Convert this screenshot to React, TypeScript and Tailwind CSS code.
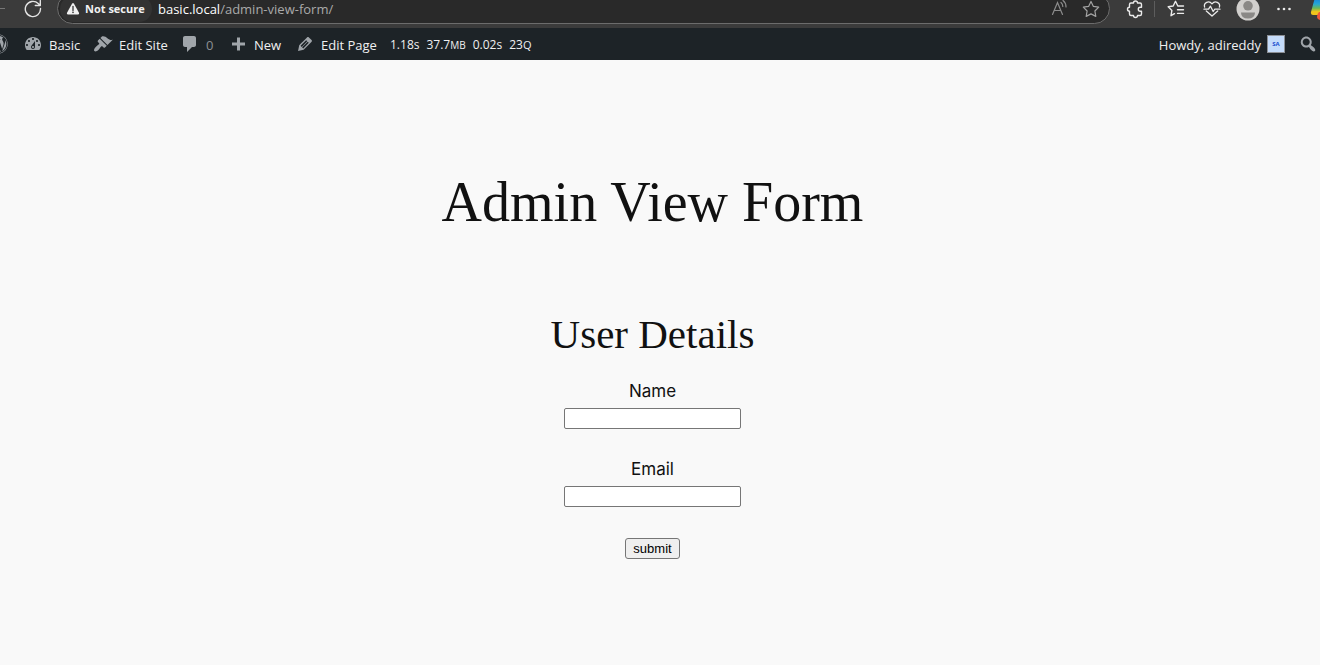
import React from "react";
import { FaWordpress } from "react-icons/fa";

type GlyphProps = { d: string; className?: string };

function Glyph({ d, className = "" }: GlyphProps) {
  return (
    <svg viewBox="0 0 20 20" aria-hidden="true" className={`size-5 shrink-0 fill-[#a0a5aa] ${className}`}>
      <path d={d} />
    </svg>
  );
}

const glyphs = {
  dashboard:
    "M3.76 16h12.48c1.1-1.37 1.76-3.11 1.76-5 0-4.42-3.58-8-8-8s-8 3.58-8 8c0 1.89.66 3.63 1.76 5zM10 4c.55 0 1 .45 1 1s-.45 1-1 1-1-.45-1-1 .45-1 1-1zM6 6c.55 0 1 .45 1 1s-.45 1-1 1-1-.45-1-1 .45-1 1-1zm8 0c.55 0 1 .45 1 1s-.45 1-1 1-1-.45-1-1 .45-1 1-1zm-5.37 5.55L12 7v6c0 1.1-.9 2-2 2s-2-.9-2-2c0-.57.24-1.08.63-1.45zM4 10c.55 0 1 .45 1 1s-.45 1-1 1-1-.45-1-1 .45-1 1-1zm12 0c.55 0 1 .45 1 1s-.45 1-1 1-1-.45-1-1 .45-1 1-1zm-5 3c0-.55-.45-1-1-1s-1 .45-1 1 .45 1 1 1 1-.45 1-1z",
  brush:
    "M14.48 11.06L7.41 3.99l1.5-1.5c.5-.56 2.3-.47 3.51.32 1.21.8 1.43 1.28 2.91 2.1 1.18.64 2.45 1.26 4.45.85zm-.71.71L6.7 4.7 4.93 6.47c-.39.39-.39 1.02 0 1.41l1.06 1.06c.39.39.39 1.03 0 1.42-.6.6-1.43 1.11-2.21 1.69-.35.26-.7.53-1.01.84C1.43 14.23.4 16.08 1.4 17.07c.99 1 2.84-.03 4.18-1.36.31-.31.58-.66.85-1.02.57-.78 1.08-1.61 1.69-2.21.39-.39 1.02-.39 1.41 0l1.06 1.06c.39.39 1.02.39 1.41 0z",
  comment: "M5 2h9c1.1 0 2 .9 2 2v7c0 1.1-.9 2-2 2h-2l-5 5v-5H5c-1.1 0-2-.9-2-2V4c0-1.1.9-2 2-2z",
  plus: "M17 8.500v3h-5v5H9v-5H4v-3h5v-5h3v5h5z",
  pencil:
    "M13.89 3.39l2.71 2.72c.46.46.42 1.24.03 1.64l-8.01 8.02-5.56 1.16 1.16-5.58s7.6-7.63 7.99-8.03c.39-.39 1.22-.39 1.68.07zm-2.73 2.79l-5.59 5.61 1.11 1.11 5.54-5.65zm-2.97 8.23l5.58-5.6-1.07-1.08-5.59 5.6z",
  search:
    "M12.14 4.18c1.87 1.87 2.11 4.75.72 6.89.12.1.22.21.36.31.2.16.47.36.81.59.34.24.56.39.66.47.42.31.73.57.94.78.32.32.6.65.84 1 .25.35.44.69.59 1.04.14.35.21.68.18 1-.02.32-.14.59-.36.81s-.49.34-.81.36c-.31.02-.65-.04-.99-.19-.35-.14-.7-.34-1.04-.59-.35-.24-.68-.52-1-.84-.21-.21-.47-.52-.77-.93-.1-.13-.25-.35-.47-.66-.22-.32-.4-.57-.56-.78-.16-.2-.29-.35-.44-.5-2.07 1.09-4.69.76-6.44-.98-2.14-2.15-2.14-5.64 0-7.78 2.15-2.15 5.63-2.15 7.78 0zm-1.41 6.36c1.36-1.37 1.36-3.58 0-4.95-1.37-1.37-3.59-1.37-4.95 0-1.37 1.37-1.37 3.58 0 4.95 1.36 1.37 3.58 1.37 4.95 0z",
};

function BrowserBar() {
  return (
    <header className="h-7 overflow-hidden bg-[#3b3b3b]">
      <div className="-mt-[7px] flex h-[31px] items-center">
        <div className="flex w-[57px] shrink-0 items-center">
          <button type="button" aria-label="Forward" className="w-[23px]">
            <svg viewBox="0 0 23 16" className="h-4 w-[23px]" fill="none" stroke="#777777">
              <path d="M0 7.5h5" />
            </svg>
          </button>
          <button type="button" aria-label="Refresh">
            <svg viewBox="0 0 20 20" className="size-5" fill="none" stroke="#e4e4e4" strokeWidth="1.4" strokeLinecap="round" strokeLinejoin="round">
              <path d="M17.5 9.5a7.6 7.6 0 1 1-2.3-5l1.8 1.8M17.3 1.5v5h-5" />
            </svg>
          </button>
        </div>
        <div className="flex h-[31px] min-w-0 flex-1 items-center rounded-full border border-[#6c6c6c] bg-[#292929] pl-[2px] pr-2">
          <button type="button" className="flex h-[26px] w-[92px] shrink-0 items-center gap-[5px] rounded-full bg-[#333333] pl-[6px] text-[11px] leading-[14px] font-bold text-[#f1f1f1]">
            <svg viewBox="0 0 14 14" className="size-[14px] shrink-0" aria-hidden="true">
              <path d="M6 1.7Q7 .2 8 1.7l5 9.1q.7 1.6-1 1.7H2Q.3 12.4 1 10.8z" fill="#f1f1f1" />
              <path d="M7 4.5v4" stroke="#333333" strokeWidth="1.3" strokeLinecap="round" />
              <circle cx="7" cy="10.4" r=".8" fill="#333333" />
            </svg>
            <span className="whitespace-nowrap">Not secure</span>
          </button>
          <span className="ml-[6px] flex-1 whitespace-nowrap text-[13px] leading-[14px] text-[#a9a9a9]">
            <span className="text-white">basic.local</span>/admin-view-form/
          </span>
          <button type="button" aria-label="Read aloud" className="mr-3">
            <svg viewBox="0 0 20 20" className="size-5" fill="none" stroke="#8c8c8c" strokeWidth="1.2" strokeLinecap="round">
              <path d="M3.5 15.5L8.500 3.500l5 12M5.300 11.500h6.500M12 3.500q1.800 1.500 1.800 4M14 1.500q3 2.300 3 6.500" />
            </svg>
          </button>
          <button type="button" aria-label="Add to favorites">
            <svg viewBox="0 0 20 20" className="size-5" fill="none" stroke="#a3a3a3" strokeWidth="1.2" strokeLinejoin="round">
              <path d="M10 2.500l2.400 4.900 5.300.8-3.800 3.800.9 5.400-4.800-2.500-4.800 2.500.9-5.400-3.800-3.800 5.300-.8z" />
            </svg>
          </button>
        </div>
        <div className="flex w-[210px] shrink-0 items-center overflow-hidden">
          <button type="button" aria-label="Extensions" className="ml-[15px]">
            <svg viewBox="0 0 20 20" className="size-5" fill="none" stroke="#ebebeb" strokeWidth="1.4" strokeLinejoin="round">
              <path d="M6 4h2.500a2 2 0 0 1 4 0H15q1.500 0 1.500 1.500v2.700h-1.200a2 2 0 0 0 0 4h1.200v2.800q0 1.500-1.500 1.500h-2.500a2 2 0 0 1-4 0H6q-1.500 0-1.500-1.500v-2.800a2 2 0 0 1 0-4V5.500Q4.500 4 6 4z" />
            </svg>
          </button>
          <span className="ml-[9px] h-4 w-px shrink-0 bg-[#5d5d5d]" />
          <button type="button" aria-label="Favorites" className="ml-[11px]">
            <svg viewBox="0 0 20 20" className="size-5" fill="none" stroke="#ebebeb" strokeWidth="1.4" strokeLinecap="round" strokeLinejoin="round">
              <path d="M17.500 7h-5.700L9.500 2.300 7.200 7l-5 .8 3.700 3.600-.9 5.300 3.500-2M11.500 10.700h6M11.500 14.400h6" />
            </svg>
          </button>
          <button type="button" aria-label="Browser essentials" className="ml-4">
            <svg viewBox="0 0 20 20" className="size-5" fill="none" stroke="#ebebeb" strokeWidth="1.3" strokeLinecap="round" strokeLinejoin="round">
              <path d="M2.600 8.200C1.300 3.500 7 1.200 10 4.800c3-3.600 8.700-1.300 7.400 3.400M4.300 12L10 17l5.700-5M2 10.200h4.500l2-3 2.700 5.300 1.600-2.300H18" />
            </svg>
          </button>
          <button type="button" aria-label="Profile" className="ml-[14px]">
            <svg viewBox="0 0 24 24" className="size-6">
              <circle cx="12" cy="12" r="11.5" fill="#d1cfcd" />
              <circle cx="12" cy="8.8" r="4.8" fill="#8a8886" />
              <path d="M5 15.500h14q0 6-7 6t-7-6z" fill="#8a8886" />
            </svg>
          </button>
          <button type="button" aria-label="Settings and more" className="ml-[14px]">
            <svg viewBox="0 0 20 20" className="size-5" fill="#ebebeb">
              <circle cx="4.5" cy="10" r="1.3" />
              <circle cx="10" cy="10" r="1.3" />
              <circle cx="15.5" cy="10" r="1.3" />
            </svg>
          </button>
          <button type="button" aria-label="Copilot" className="ml-[16px] shrink-0">
            <svg viewBox="0 0 24 24" className="size-6">
              <defs>
                <linearGradient id="copilot" x1="0" y1="0" x2="0" y2="1">
                  <stop offset="0" stopColor="#1781dc" />
                  <stop offset=".35" stopColor="#24a7d8" />
                  <stop offset=".6" stopColor="#6bb85a" />
                  <stop offset=".8" stopColor="#f2c51c" />
                </linearGradient>
              </defs>
              <path d="M6 1h10l-4 15q-1 2-3 2H3q-2.500 0-2-3L4 4q.5-2 2-3z" fill="url(#copilot)" />
              <path d="M9 15h12l-3 6q-1 2-3 2h-4q-4 0-4-3.500 0-2.500 2-4.500z" fill="#f0563c" />
            </svg>
          </button>
        </div>
      </div>
    </header>
  );
}

function BarLink({ d, label, width, muted = false }: { d: string; label: string; width: string; muted?: boolean }) {
  return (
    <a href="#" className={`flex shrink-0 items-center gap-[6px] whitespace-nowrap ${width} ${muted ? "text-[#8c8f94]" : ""}`}>
      <Glyph d={d} />
      <span className="pt-[2px]">{label}</span>
    </a>
  );
}

function AdminBar() {
  return (
    <nav aria-label="Toolbar" className="flex h-8 items-center overflow-hidden bg-[#1d2327] text-[13px] leading-5 text-[#f0f0f1]">
      <a href="#" aria-label="About WordPress" className="w-[23px] shrink-0">
        <FaWordpress className="-ml-3 size-5 text-[#a0a5aa]" />
      </a>
      <BarLink d={glyphs.dashboard} label="Basic" width="w-[70px]" />
      <BarLink d={glyphs.brush} label="Edit Site" width="w-[87px]" />
      <BarLink d={glyphs.comment} label="0" width="w-[48px]" muted />
      <BarLink d={glyphs.plus} label="New" width="w-[67px]" />
      <BarLink d={glyphs.pencil} label="Edit Page" width="w-[95px]" />
      <a href="#" className="flex items-baseline gap-[7px] whitespace-nowrap pt-[2px] text-[12px]">
        <span>1.18s</span>
        <span>
          37.7<small className="text-[10px]">MB</small>
        </span>
        <span>0.02s</span>
        <span>
          23<small className="text-[11px]">Q</small>
        </span>
      </a>
      <a href="#" className="ml-auto flex items-center gap-[6px] whitespace-nowrap">
        <span className="pt-[2px]">Howdy, adireddy</span>
        <span className="flex size-[18px] items-center justify-center border border-[#8c8f94] bg-[#c5dcfa] text-[6px] font-bold text-[#1d4fd0]">
          SA
        </span>
      </a>
      <button type="button" aria-label="Search" className="ml-[13px] w-[22px] shrink-0">
        <Glyph d={glyphs.search} />
      </button>
    </nav>
  );
}

function Field({ id, label, type }: { id: string; label: string; type: string }) {
  return (
    <div className="mb-[27px] flex flex-col items-center">
      <label htmlFor={id} className="mb-1 text-[17px] leading-[26px]">
        {label}
      </label>
      <input id={id} type={type} className="h-[21px] w-[177px] rounded-[2px] border border-[#767676] bg-white px-[2px] text-[13px]" />
    </div>
  );
}

export default function App() {
  return (
    <div className="min-h-screen bg-[#f9f9f9] font-['Open_Sans','Noto_Sans',sans-serif]">
      <BrowserBar />
      <AdminBar />
      <main className="flex flex-col items-center pr-[15px] pt-[108px] font-['Inter',sans-serif] text-[#111111]">
        <h1 className="text-center font-['Liberation_Serif',serif] text-[56px] leading-[68px]">Admin View Form</h1>
        <form className="mt-[72px] flex flex-col items-center" onSubmit={(event) => event.preventDefault()}>
          <h2 className="mb-[18px] text-center font-['Liberation_Serif',serif] text-[41px] leading-[52px]">User Details</h2>
          <Field id="name" label="Name" type="text" />
          <Field id="email" label="Email" type="email" />
          <button type="submit" className="mt-1 h-[21px] w-[55px] rounded-[3px] border border-[#767676] bg-[#efefef] font-['Liberation_Sans',sans-serif] text-[13px] leading-[19px] text-black">
            submit
          </button>
        </form>
      </main>
    </div>
  );
}
